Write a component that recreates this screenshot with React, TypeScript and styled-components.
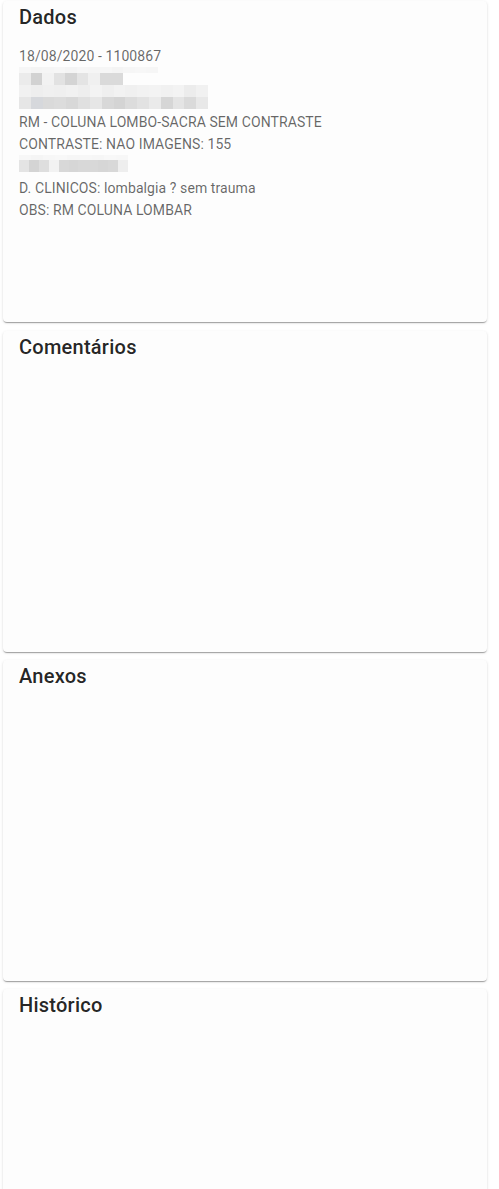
import React from 'react';
import styled, { createGlobalStyle } from 'styled-components';

const GlobalStyle = createGlobalStyle`
  html, body {
    margin: 0;
    padding: 0;
    background: #ffffff;
    font-family: Roboto, "Liberation Sans", Arial, sans-serif;
  }
`;

// page column holding the stacked cards
const Page = styled.div`
  width: 484px;
  padding: 1px 0 0 3px;
  display: flex;
  flex-direction: column;
  gap: 8px;
`;

const Card = styled.section`
  background: #fdfdfd;
  border-radius: 4px;
  height: 321px;
  flex-shrink: 0;
  padding: 4px 16px 0;
  box-sizing: border-box;
  box-shadow: 0 2px 1px -1px rgba(0, 0, 0, 0.2), 0 1px 1px 0 rgba(0, 0, 0, 0.14),
    0 1px 3px 0 rgba(0, 0, 0, 0.12);

  &:first-child {
    margin-bottom: 1px;
  }
`;

const Title = styled.h2`
  margin: 0;
  font-size: 20px;
  line-height: 24px;
  font-weight: 500;
  letter-spacing: 0.25px;
  color: rgba(0, 0, 0, 0.87);
`;

const Body = styled.div`
  margin-top: 16px;
  font-size: 14px;
  line-height: 22px;
  letter-spacing: 0.09px;
  color: rgba(0, 0, 0, 0.6);
`;

const Line = styled.div`
  white-space: nowrap;
`;

// pixelated (censored) text block
const Mosaic = styled.div<{ $height: number }>`
  height: ${(p) => p.$height}px;
  display: flex;
  flex-direction: column;
`;

const MosaicRow = styled.div<{ $width: number; $height: number }>`
  display: flex;
  width: ${(p) => p.$width}px;
  height: ${(p) => p.$height}px;
`;

const Cell = styled.span`
  flex: 1;
`;

interface RowData {
  width: number;
  height: number;
  cells: string[];
}

const mosaicA: RowData[] = [
  { width: 139, height: 6, cells: ['#f6f6f6', '#f4f4f4', '#f5f5f5', '#f6f6f6', '#f4f4f4', '#f6f6f6', '#f5f5f5', '#f6f6f6', '#f4f4f4', '#f6f6f6', '#f7f7f7', '#f6f6f6'] },
  { width: 104, height: 12, cells: ['#ebebeb', '#d2d2d2', '#f2f2f2', '#e2e2e2', '#d4d4d4', '#e4e4e4', '#f0f0f0', '#dadada', '#dadada'] },
  { width: 189, height: 12, cells: ['#f1f1f1', '#eeeeee', '#f0f0f0', '#efefef', '#f1f1f1', '#eeeeee', '#f3f3f3', '#efefef', '#f2f2f2', '#f0f0f0', '#f2f2f2', '#f3f3f3', '#f1f1f1', '#f3f3f3', '#ececec', '#f1f1f1'] },
  { width: 189, height: 12, cells: ['#e6e6e6', '#d6d8dc', '#dadada', '#dcdcdc', '#d8d8d8', '#e0e0e0', '#e6e6e6', '#d8d8d8', '#d4d4d4', '#dcdcdc', '#e2e2e2', '#eaeaea', '#d6d6d6', '#e4e4e4', '#dadada', '#e8e8e8'] },
];

const mosaicB: RowData[] = [
  { width: 109, height: 5, cells: ['#f7f7f7', '#f5f5f5', '#f7f7f7', '#f8f8f8', '#f6f6f6', '#f7f7f7', '#f6f6f6', '#f8f8f8', '#f7f7f7'] },
  { width: 109, height: 12, cells: ['#e4e4e4', '#d4d4d4', '#dedede', '#f2f2f2', '#d8d8d8', '#d6d6d6', '#d8d8d8', '#d8d8d8', '#d6d6d6', '#d8d8d8', '#eeeeee'] },
];

const Pixelated: React.FC<{ rows: RowData[]; height: number }> = ({ rows, height }) => (
  <Mosaic $height={height}>
    {rows.map((row, i) => (
      <MosaicRow key={i} $width={row.width} $height={row.height}>
        {row.cells.map((c, j) => (
          <Cell key={j} style={{ background: c }} />
        ))}
      </MosaicRow>
    ))}
  </Mosaic>
);

const App: React.FC = () => {
  return (
    <>
      <GlobalStyle />
      <Page>
        <Card>
          <Title>Dados</Title>
          <Body>
            <Line>18/08/2020 - 1100867</Line>
            <Pixelated rows={mosaicA} height={44} />
            <Line>RM - COLUNA LOMBO-SACRA SEM CONTRASTE</Line>
            <Line>CONTRASTE: NAO IMAGENS: 155</Line>
            <Pixelated rows={mosaicB} height={22} />
            <Line>D. CLINICOS: lombalgia ? sem trauma</Line>
            <Line>OBS: RM COLUNA LOMBAR</Line>
          </Body>
        </Card>
        <Card>
          <Title>Comentários</Title>
        </Card>
        <Card>
          <Title>Anexos</Title>
        </Card>
        <Card>
          <Title>Histórico</Title>
        </Card>
      </Page>
    </>
  );
};

export default App;
